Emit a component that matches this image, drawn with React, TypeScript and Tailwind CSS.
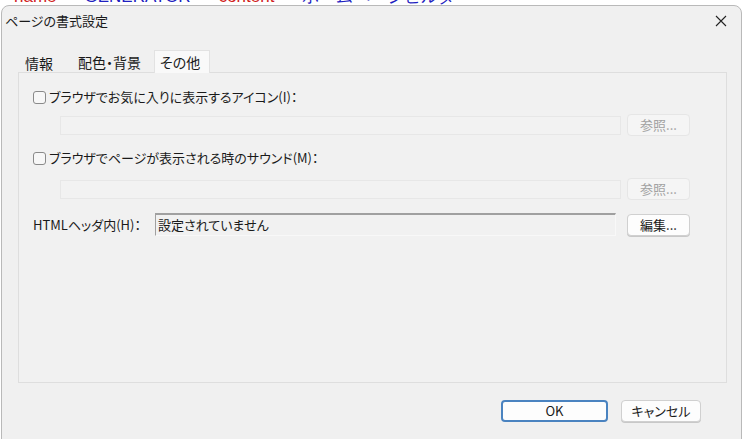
import React from 'react'

const font = "font-['Noto_Sans_CJK_JP','Noto_Sans',sans-serif] [font-feature-settings:'palt']"

function Checkbox() {
  return <span className="w-[13px] h-[13px] shrink-0 rounded-[3px] border border-[#8a8a8a] bg-[#f7f7f7]" />
}

function Button({ label, disabled, primary, w = 'w-[63px]' }: { label: string; disabled?: boolean; primary?: boolean; w?: string }) {
  return (
    <div
      className={`${w} h-[22px] flex items-center justify-center rounded-[4px] text-[13px] ${
        disabled
          ? 'border border-[#e6e6e6] bg-[#f5f5f5] text-[#a2a2a2]'
          : primary
          ? 'border-2 border-[#4a83c0] bg-[#fdfdfd] text-[#1a1a1a]'
          : 'border border-[#d0d0d0] bg-[#fdfdfd] text-[#1a1a1a] shadow-[0_1px_0_#c8c8c8]'
      }`}
    >
      {label}
    </div>
  )
}

export default function App() {
  return (
    <div className={`w-[745px] h-[439px] bg-white overflow-hidden ${font}`}>
      {/* 背景ページの文字 */}
      <div className="h-[5px] overflow-hidden">
        <div className="flex gap-[28px] pl-[14px] -mt-[11px] text-[17px] leading-[16px] font-['Liberation_Sans',sans-serif]">
          <span className="text-[#d02020]">name</span>
          <span className="text-[#2020c0]">GENERATOR</span>
          <span className="text-[#d02020]">content</span>
          <span className="text-[#2020c0]">ホームページビルダー</span>
        </div>
      </div>

      {/* ダイアログ */}
      <div className="ml-[1px] w-[741px] h-[445px] rounded-t-[8px] border border-[#b9b9b9] bg-[#f0f0f0] flex flex-col text-[#1a1a1a]">
        {/* タイトル */}
        <div className="h-[28px] flex items-center justify-between pl-[3px] pr-[14px] pt-[1px]">
          <span className="text-[13px]">ページの書式設定</span>
          <svg width="12" height="12" viewBox="0 0 12 12" className="mt-[1px]">
            <path d="M1 1L11 11M11 1L1 11" stroke="#222" strokeWidth="1.1" />
          </svg>
        </div>

        {/* タブ */}
        <div className="mt-[16px] ml-[16px] w-[709px] flex items-end h-[22px] text-[14px]">
          <div className="h-[20px] w-[54px] flex items-center pl-[7px] -mb-[1px]">情報</div>
          <div className="h-[20px] w-[82px] flex items-center pl-[6px]">配色・背景</div>
          <div className="h-[23px] w-[56px] flex items-center pl-[5px] bg-[#f9f9f9] border border-b-0 border-[#e2e2e2] relative z-10 -mb-[1px]">その他</div>
        </div>
        <div className="ml-[16px] w-[709px] h-[311px] border border-[#dedede] bg-[#f1f1f1] text-[13px] pt-[15px] pl-[14px]">
          <div className="flex items-center gap-[3px] h-[18px]">
            <Checkbox />
            <span>ブラウザでお気に入りに表示するアイコン(I)：</span>
          </div>
          <div className="flex items-center mt-[8px] pl-[27px]">
            <div className="w-[561px] h-[19px] border border-[#e7e7e7] bg-[#f2f2f2]" />
            <div className="ml-[6px]"><Button label="参照..." disabled /></div>
          </div>
          <div className="flex items-center gap-[3px] h-[18px] mt-[13px]">
            <Checkbox />
            <span>ブラウザでページが表示される時のサウンド(M)：</span>
          </div>
          <div className="flex items-center mt-[11px] pl-[27px]">
            <div className="w-[561px] h-[19px] border border-[#e7e7e7] bg-[#f2f2f2]" />
            <div className="ml-[6px]"><Button label="参照..." disabled /></div>
          </div>
          <div className="flex items-center mt-[13px]">
            <span className="w-[122px]">HTMLヘッダ内(H)：</span>
            <div className="w-[461px] h-[23px] border-t-[2px] border-l border-[#a0a0a0] border-r border-b border-r-[#f8f8f8] border-b-[#f8f8f8] flex items-center pl-[2px]">
              設定されていません
            </div>
            <div className="ml-[11px]"><Button label="編集..." /></div>
          </div>
        </div>

        {/* 下部ボタン */}
        <div className="flex justify-end gap-[13px] pr-[40px] mt-[17px]">
          <Button label="OK" primary w="w-[107px]" />
          <Button label="キャンセル" w="w-[80px]" />
        </div>
      </div>
    </div>
  )
}
